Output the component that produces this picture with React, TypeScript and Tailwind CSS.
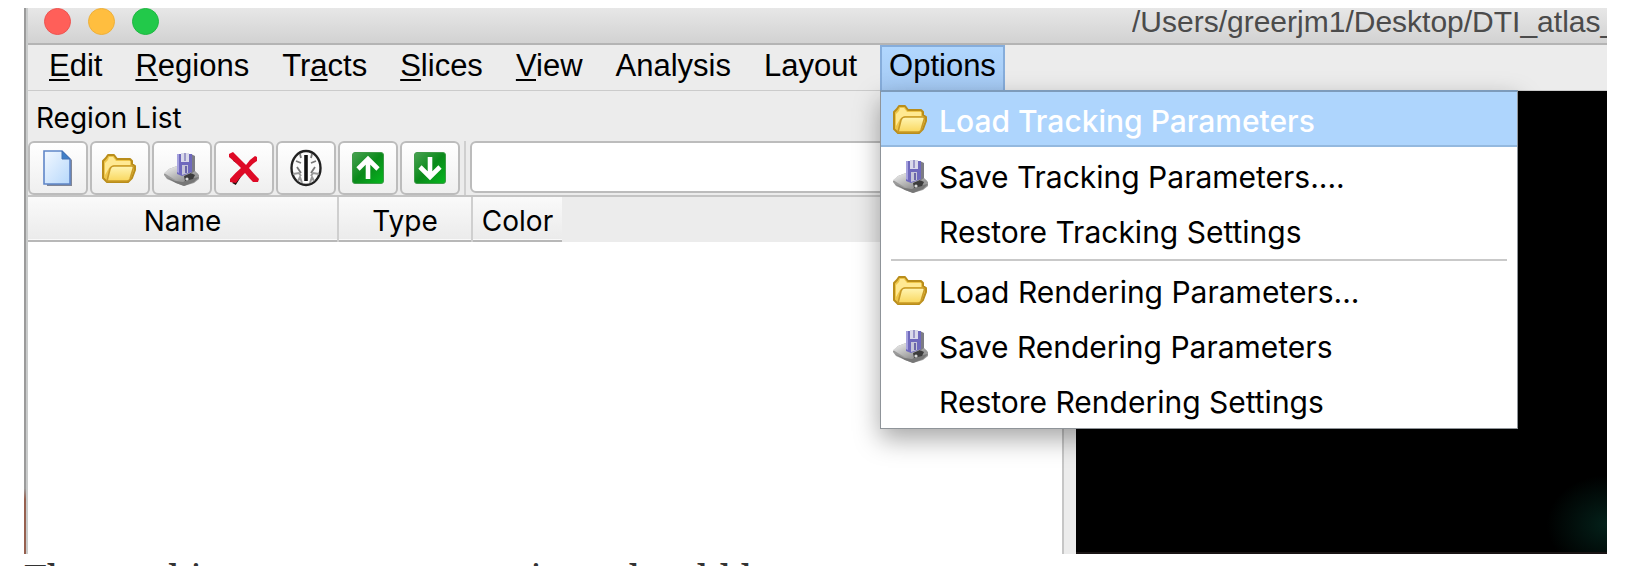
import type { ReactNode } from 'react';

function PageIcon() {
  return (
    <svg viewBox="0 0 36 36" className="size-9" aria-hidden="true">
      <defs>
        <linearGradient id="page" x1="0" y1="0" x2="1" y2="1">
          <stop offset="0" stopColor="#f2f8ff" />
          <stop offset="1" stopColor="#b7d8fb" />
        </linearGradient>
      </defs>
      <path d="M5 2h18l9 8v26H7z" fill="#5a6277" opacity=".75" />
      <path d="M4 1h18l8 8v25H4z" fill="url(#page)" stroke="#5f86c8" strokeWidth="1.6" />
      <path d="M22 1l8 8h-8z" fill="#3f7fc8" stroke="#4472b4" />
    </svg>
  );
}

function FolderIcon() {
  return (
    <svg viewBox="0 0 36 36" className="size-9" aria-hidden="true">
      <defs>
        <linearGradient id="folder" x1="0" y1="0" x2="0" y2="1">
          <stop offset="0" stopColor="#fff5b4" />
          <stop offset="1" stopColor="#f9d75e" />
        </linearGradient>
      </defs>
      <path
        d="M1 28V11l3-3 2-3h6l3 4h13l2 2v3l3 2v4l-3 8-4 4H5z"
        fill="#eec64a"
        stroke="#b98d1b"
        strokeWidth="2"
        strokeLinejoin="round"
      />
      <path d="M3 13l3-3 1-3h4l3 4h14v4H12l-5 3-4 7z" fill="#ffe992" />
      <path
        d="M5 31l3-12q1-3 4-3h18q2 0 1 3l-3 10q-1 2-3 2z"
        fill="url(#folder)"
        stroke="#c99a26"
        strokeWidth="1.6"
        strokeLinejoin="round"
      />
    </svg>
  );
}

function SaveIcon() {
  return (
    <svg viewBox="0 0 36 36" className="size-9" aria-hidden="true">
      <defs>
        <linearGradient id="drive" x1="0" y1="0" x2="1" y2="1">
          <stop offset="0" stopColor="#f4f4f4" />
          <stop offset="1" stopColor="#7c7c7c" />
        </linearGradient>
      </defs>
      <path d="M0 24l5-5 8-3 16 3 6 6v4l-5 4-10 3-8-3-9-4-3-4z" fill="#9a9a9a" />
      <path d="M0 23l5-4 8-3 15 3 6 5-12 6-9 1z" fill="url(#drive)" />
      <path d="M2 27l9 4 8 1 5-3 11-2-5 5-10 4-8-3z" fill="#777" />
      <path d="M20 26l7-3 4 2-2 4-8 2z" fill="#3c3c3c" />
      <circle cx="23" cy="29" r="1.6" fill="#d8d8d8" />
      <path d="M27 4l4 2v15l-4 3z" fill="#7c7c84" />
      <path d="M13 4h15v18l-10 4-5-2z" fill="#6f69bd" />
      <path d="M17 3h8v9h-8z" fill="#dadaea" />
      <path d="M20 3h2v8h-2z" fill="#9b98c8" />
      <path d="M18 15h6v8l-6 2z" fill="#c6c5d8" />
      <path d="M21 16h2v7h-2z" fill="#6a66a8" />
      <path d="M13 4h2v19l-2-1z" fill="#a6a2de" />
    </svg>
  );
}

function DeleteIcon() {
  return (
    <svg viewBox="0 0 36 36" className="size-9" aria-hidden="true">
      <path d="M8 34q5-9 11-15M8 9q10 6 15 13" fill="none" stroke="#1c0c0c" strokeWidth="4" />
      <path
        d="M3 4l4-2q6 6 13 13 4-6 9-9l2 1v4q-5 3-8 7 5 6 10 11l-1 3h-5q-4-4-8-9-6 5-9 10l-6-1v-3q5-6 11-11Q8 11 3 7z"
        fill="#de0a26"
      />
    </svg>
  );
}

function BrainIcon() {
  return (
    <svg viewBox="0 0 36 40" className="h-10 w-9" aria-hidden="true">
      <ellipse cx="18" cy="20" rx="14.5" ry="17" fill="#fbfbfb" stroke="#222" strokeWidth="2.4" />
      <path d="M18 7v26" stroke="#111" strokeWidth="3.6" />
      <path
        d="M12 6l1 4M24 6l-1 4M8 13l5 2M28 13l-5 2M9 19l4 6M27 19l-4 6"
        fill="none"
        stroke="#777"
        strokeWidth="1.8"
      />
      <path
        d="M5 26l6-1 2 3M31 26l-6-1-2 3M10 33l2-4 2 6M26 33l-2-4-2 6"
        fill="none"
        stroke="#999"
        strokeWidth="2"
      />
    </svg>
  );
}

function ArrowIcon({ down = false }: { down?: boolean }) {
  return (
    <svg viewBox="0 0 36 36" className="size-9" aria-hidden="true">
      <defs>
        <linearGradient id="green" x1="0" y1="0" x2="1" y2="1">
          <stop offset="0" stopColor="#4aa253" />
          <stop offset=".5" stopColor="#0a8a1a" />
          <stop offset="1" stopColor="#06b81f" />
        </linearGradient>
      </defs>
      <rect x="2.5" y="2.5" width="31" height="31" rx="2.5" fill="url(#green)" stroke="#3f9a48" />
      <path
        d={down ? 'M18 7v20M8 17l10 10 10-10' : 'M18 29V9M8 19L18 9l10 10'}
        fill="none"
        stroke="#fff"
        strokeWidth="4.6"
      />
    </svg>
  );
}

function MenuButton({ children, open = false }: { children: ReactNode; open?: boolean }) {
  return (
    <button
      type="button"
      className={
        open
          ? 'h-[46px] border-2 border-b-0 border-[#86addb] bg-linear-to-b from-[#b1d7fe] to-[#a4c9f3] px-[7px] pb-1.5'
          : 'h-[46px] px-2.5 pb-1'
      }
    >
      {children}
    </button>
  );
}

function Key({ children }: { children: ReactNode }) {
  return <span className="underline decoration-2 underline-offset-[3px]">{children}</span>;
}

function MenuItem({ icon, label, active = false }: { icon?: ReactNode; label: string; active?: boolean }) {
  return (
    <li>
      <button
        type="button"
        className={
          active
            ? 'flex h-[55px] w-full items-center gap-2.5 border-b-2 border-[#94b9df] bg-[#aed5fd] pl-3 font-medium text-white'
            : 'flex h-[55px] w-full items-center gap-2.5 pl-3'
        }
      >
        <span className="w-9">{icon}</span>
        <span className="pt-1">{label}</span>
      </button>
    </li>
  );
}

const tools = [
  { label: 'New region', icon: <PageIcon /> },
  { label: 'Open region', icon: <FolderIcon /> },
  { label: 'Save region', icon: <SaveIcon /> },
  { label: 'Delete region', icon: <DeleteIcon /> },
  { label: 'Whole brain', icon: <BrainIcon /> },
  { label: 'Move up', icon: <ArrowIcon /> },
  { label: 'Move down', icon: <ArrowIcon down /> },
];

export default function App() {
  return (
    <div className="flex h-screen flex-col overflow-hidden bg-white pt-2 pr-[41px] pl-6 font-[Inter,sans-serif] text-black">
      <div className="flex min-h-0 flex-1">
        <div className="w-0.5 shrink-0 bg-linear-to-b from-[#9b9b9b] from-88% to-[#96604f] to-90%" />
        <div className="w-0.5 shrink-0 bg-[#c9cbcb]" />

        <div className="flex min-w-0 flex-1 flex-col bg-[#ececec]">
          <header className="flex h-[37px] shrink-0 items-center justify-between border-b-2 border-[#b4b4b4] bg-linear-to-b from-[#e7e7e7] to-[#d2d2d2] pb-2">
            <div className="flex gap-[17px] pl-4">
              <button type="button" aria-label="Close" className="size-[27px] rounded-full border border-[#ee5350] bg-[#ff5f59]" />
              <button type="button" aria-label="Minimize" className="size-[27px] rounded-full border border-[#eeb03a] bg-[#ffbe3f]" />
              <button type="button" aria-label="Zoom" className="size-[27px] rounded-full border border-[#1fb742] bg-[#22c94a]" />
            </div>
            <h1 className="w-[475px] overflow-hidden font-['Liberation_Sans',sans-serif] text-[30px] leading-8 whitespace-nowrap text-[#4b4b4b]">
              /Users/greerjm1/Desktop/DTI_atlas_
            </h1>
          </header>

          <nav className="flex h-[46px] shrink-0 gap-[13px] border-b border-[#cbcbcb] pl-[11px] font-['Liberation_Sans',sans-serif] text-[31px] leading-9">
            <MenuButton><Key>E</Key>dit</MenuButton>
            <MenuButton><Key>R</Key>egions</MenuButton>
            <MenuButton>Tr<Key>a</Key>cts</MenuButton>
            <MenuButton><Key>S</Key>lices</MenuButton>
            <MenuButton><Key>V</Key>iew</MenuButton>
            <MenuButton>Analysis</MenuButton>
            <MenuButton>Layout</MenuButton>
            <div className="relative">
              <MenuButton open>Options</MenuButton>
              <ul className="absolute top-full left-0 z-10 w-[638px] border border-t-2 border-[#8f9499] border-t-[#7d9bbb] bg-white pb-px font-[Inter,sans-serif] text-[30px] leading-9 whitespace-nowrap shadow-[0_10px_24px_rgba(0,0,0,0.35)]">
                <MenuItem active icon={<FolderIcon />} label="Load Tracking Parameters" />
                <MenuItem icon={<SaveIcon />} label="Save Tracking Parameters...." />
                <MenuItem label="Restore Tracking Settings" />
                <li className="mx-2.5 mt-0.5 mb-px h-0.5 bg-[#c9c9c9]" />
                <MenuItem icon={<FolderIcon />} label="Load Rendering Parameters..." />
                <MenuItem icon={<SaveIcon />} label="Save Rendering Parameters" />
                <MenuItem label="Restore Rendering Settings" />
              </ul>
            </div>
          </nav>

          <main className="flex min-h-0 flex-1">
            <section className="flex w-[66.4%] flex-col">
              <h2 className="h-[50px] shrink-0 pt-1.5 pl-2 text-[28px] leading-[42px]">Region List</h2>
              <div className="flex shrink-0 gap-0.5 border-b-2 border-[#c4c4c4] pr-3">
                {tools.map((tool) => (
                  <button
                    key={tool.label}
                    type="button"
                    aria-label={tool.label}
                    className="flex h-[54px] w-[60px] items-center justify-center rounded-md border-2 border-[#bcbcbc] bg-linear-to-b from-white to-[#efefef]"
                  >
                    {tool.icon}
                  </button>
                ))}
                <div className="ml-0.5 flex-1 border-l-2 border-[#cfcfcf] pl-1">
                  <input
                    type="text"
                    aria-label="Region name"
                    className="h-[52px] w-full rounded-md border-2 border-[#bcbcbc] bg-white px-3 text-[28px]"
                  />
                </div>
              </div>
              <div className="mr-3 flex-1 border-r-2 border-[#c6c6c6] bg-white">
                <div className="bg-[#ececec]">
                  <table className="w-[534px] table-fixed border-collapse text-[28px] leading-8">
                    <thead>
                      <tr className="h-11 border-b-2 border-[#b8b8b8] bg-linear-to-b from-[#fafafa] to-[#ebebeb]">
                        <th className="w-[310px] border-r-2 border-[#cfcfcf] pt-1 font-normal">Name</th>
                        <th className="w-[134px] border-r-2 border-[#cfcfcf] pt-1 font-normal">Type</th>
                        <th className="pt-1 font-normal">Color</th>
                      </tr>
                    </thead>
                  </table>
                </div>
              </div>
            </section>
            <section
              aria-label="Tract view"
              className="flex-1 border-b-2 border-[#191414] bg-black bg-radial-[at_100%_94%] from-[#04211a] to-black to-8%"
            />
          </main>
        </div>
      </div>

      <p className="h-3 shrink-0 font-['Noto_Serif',serif] text-[37px] leading-[46px] whitespace-nowrap text-[#333]">
        The tracking parameters settings should be
      </p>
    </div>
  );
}
